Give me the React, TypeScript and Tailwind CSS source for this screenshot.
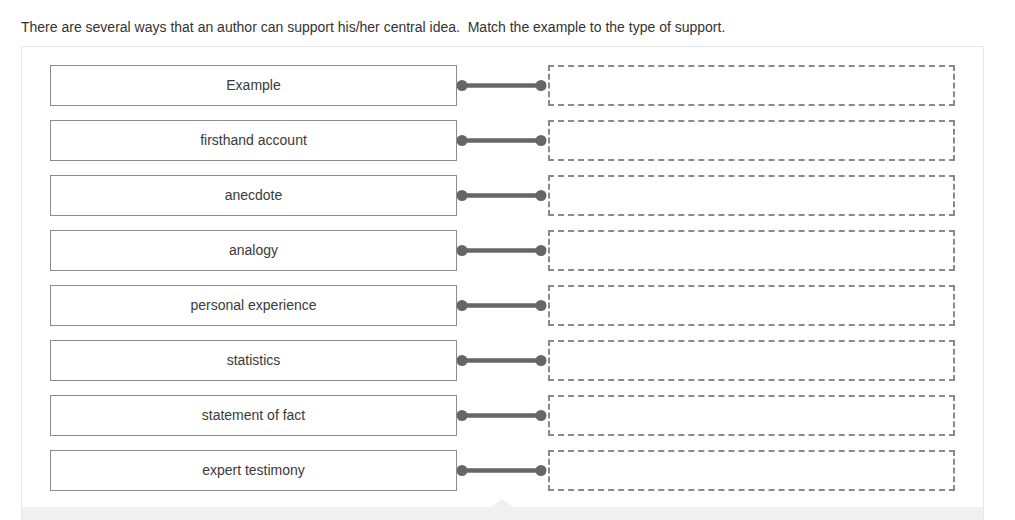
import React from 'react';

const items = [
  'Example',
  'firsthand account',
  'anecdote',
  'analogy',
  'personal experience',
  'statistics',
  'statement of fact',
  'expert testimony',
];

function Connector() {
  return (
    <svg width="91" height="41" viewBox="0 0 91 41" className="shrink-0">
      <line x1="5" y1="20.5" x2="84" y2="20.5" stroke="#666" strokeWidth="4.5" />
      <circle cx="5" cy="20.5" r="5.5" fill="#666" />
      <circle cx="84" cy="20.5" r="5.5" fill="#666" />
    </svg>
  );
}

function MatchRow({ label }: { label: string }) {
  return (
    <div className="flex items-center">
      <div className="w-[407px] h-[41px] border border-[#8c8c8c] bg-white flex items-center justify-center text-[14px] text-[#3a3a3a]">
        {label}
      </div>
      <Connector />
      <div className="w-[407px] h-[41px] border-2 border-dashed border-[#8a8a8a]" />
    </div>
  );
}

export default function App() {
  return (
    <div className="w-[1015px] h-[520px] overflow-hidden bg-white font-['Liberation_Sans',Arial,sans-serif]">
      <p className="pl-[21px] pt-[19px] text-[14px] leading-[16px] text-[#333]">
        There are several ways that an author can support his/her central idea.&nbsp; Match the example to the type of support.
      </p>
      <div className="ml-[21px] mt-[11px] w-[963px] border border-[#e8e8e8]">
        <div className="flex flex-col gap-[14px] pt-[18px] pl-[28px] pb-[16px]">
          {items.map((it) => (
            <MatchRow key={it} label={it} />
          ))}
        </div>
        <div className="relative h-[20px] bg-[#f0f0f0]">
          <div className="absolute left-[469px] -top-[8px] w-0 h-0 border-l-[11px] border-r-[11px] border-b-[8px] border-l-transparent border-r-transparent border-b-[#f0f0f0]" />
        </div>
      </div>
    </div>
  );
}
